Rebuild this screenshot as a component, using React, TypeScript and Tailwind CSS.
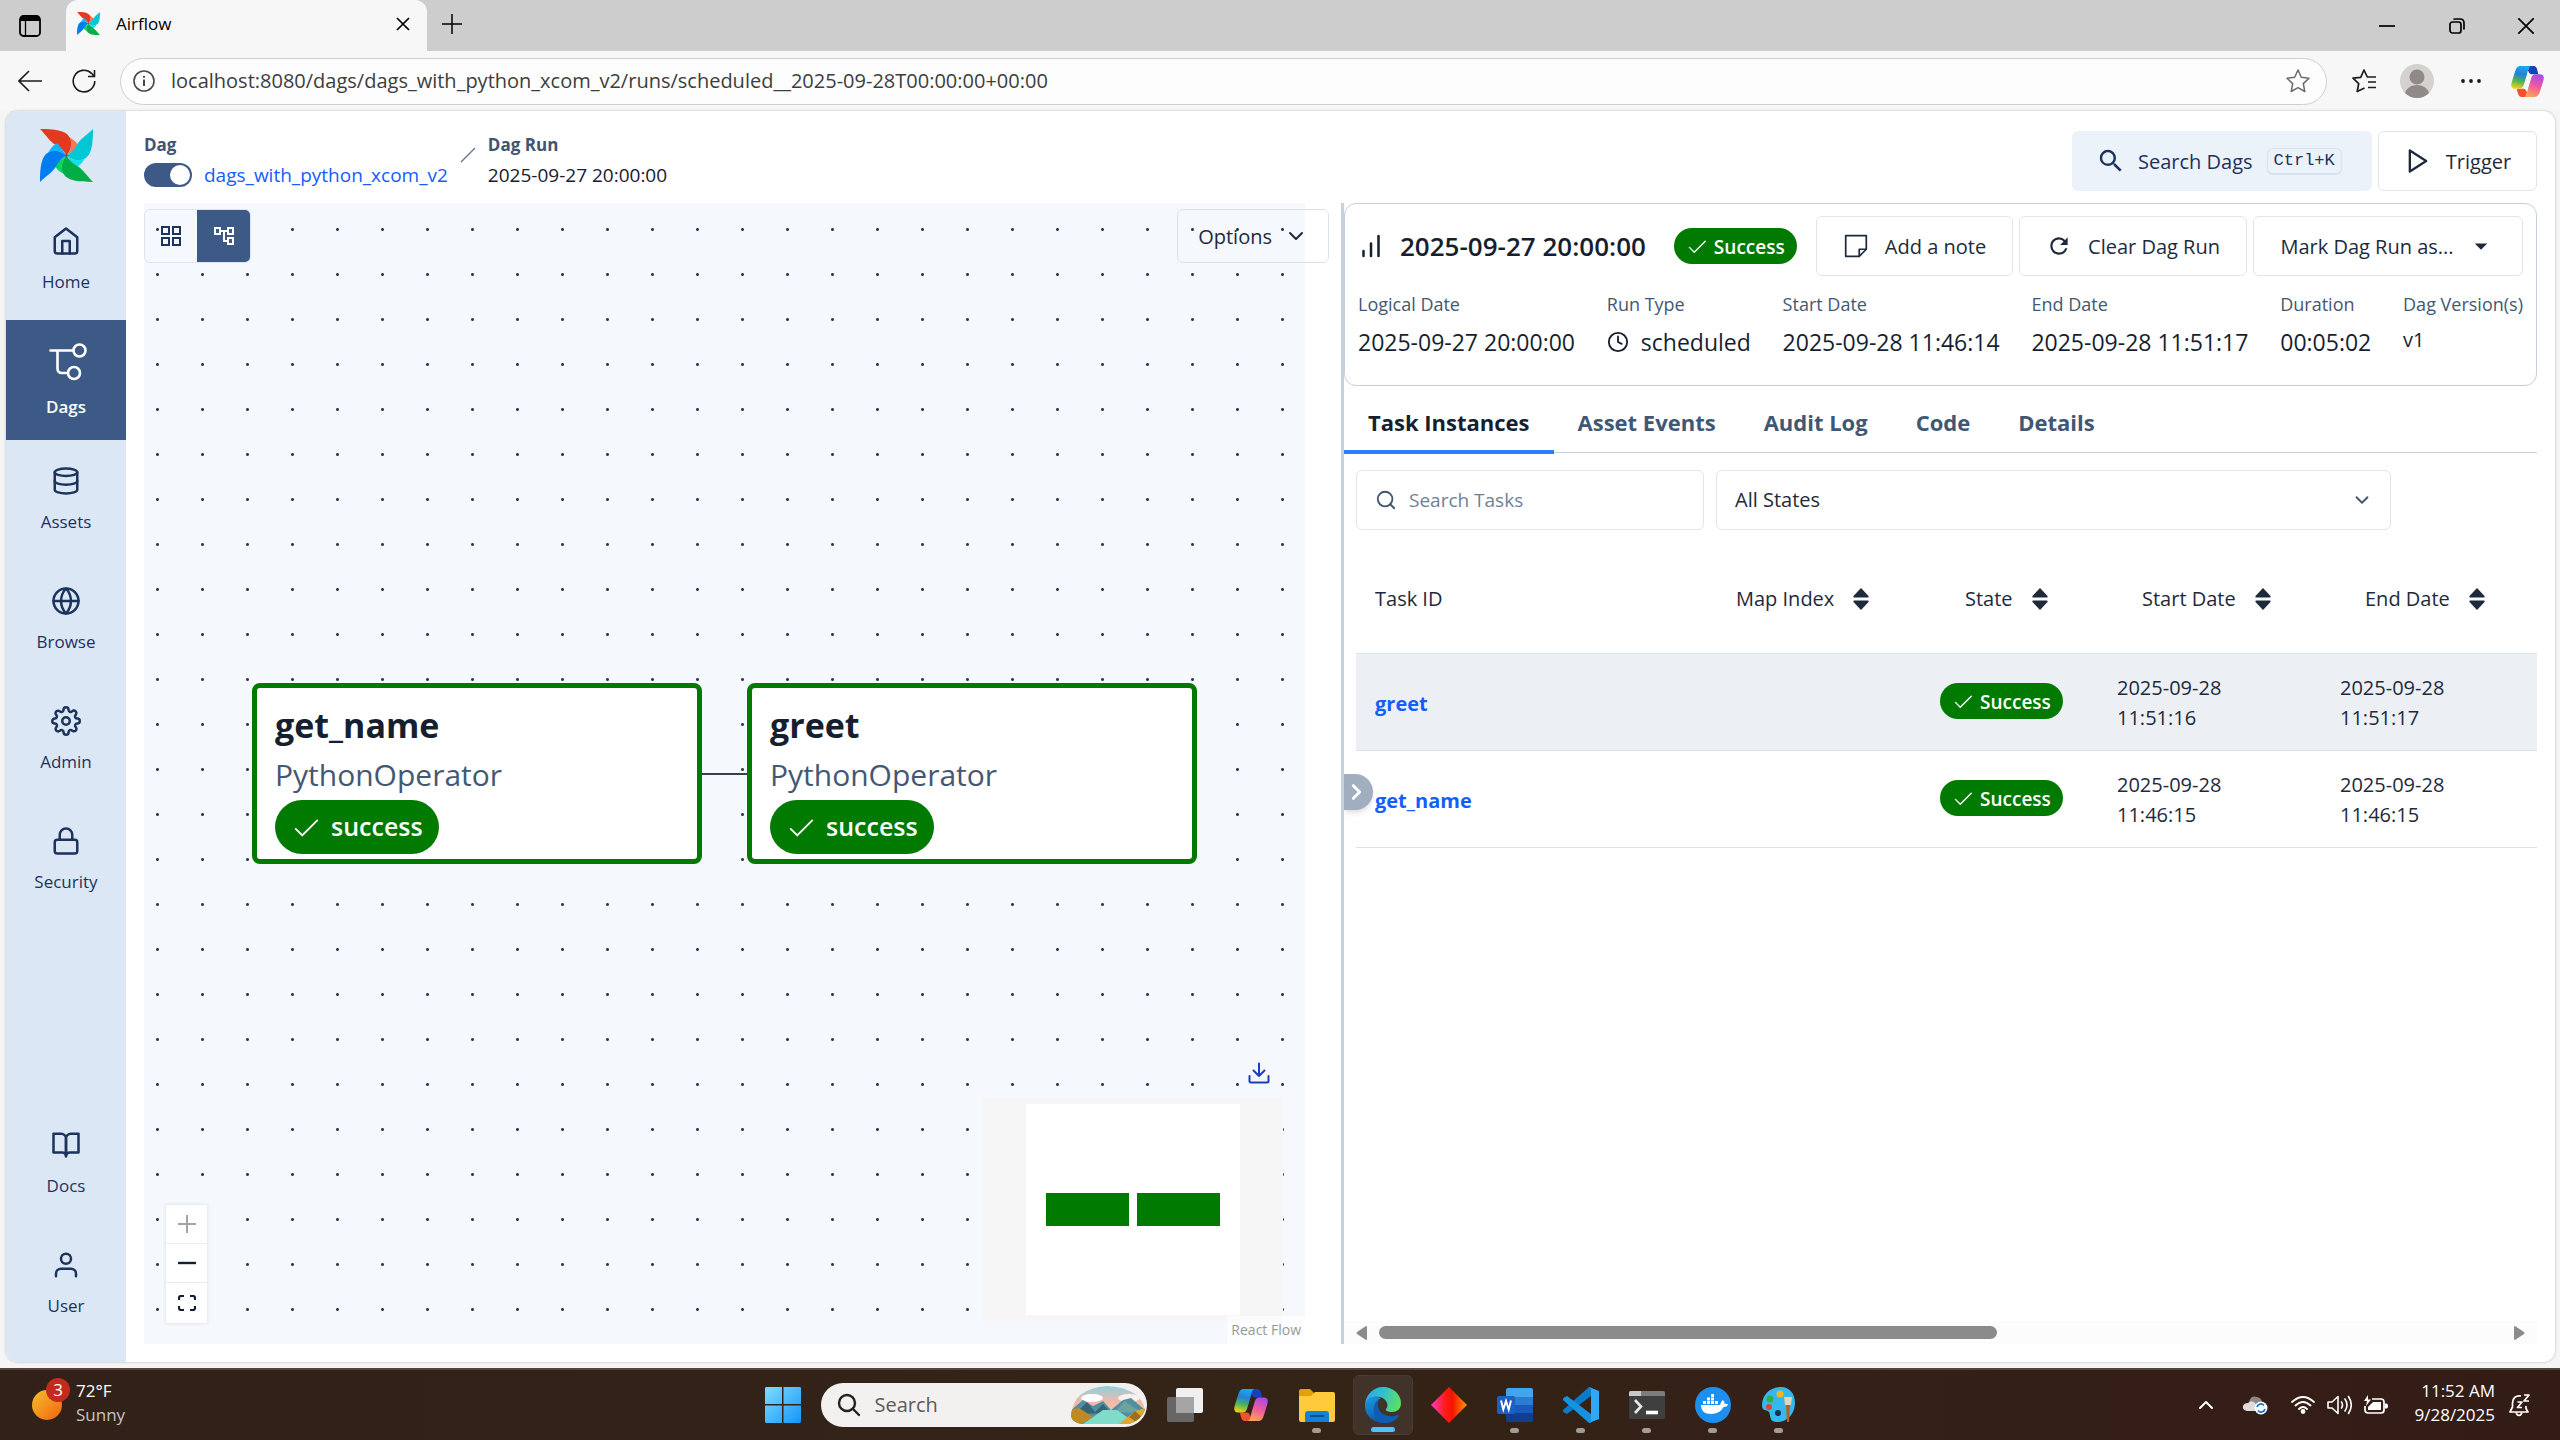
import type { ReactNode } from "react";
import {
  FiBarChart,
  FiBookOpen,
  FiChevronDown,
  FiChevronRight,
  FiChevronUp,
  FiClock,
  FiDatabase,
  FiGlobe,
  FiHome,
  FiLock,
  FiPlay,
  FiSearch,
  FiSettings,
  FiUser,
} from "react-icons/fi";
import { MdArrowDropDown, MdOutlineAccountTree, MdRefresh, MdSearch } from "react-icons/md";
import { PiCheck } from "react-icons/pi";

/* ---------- drawings ---------- */

const BLADE = "M0 0C14 0 25 1 29 8C32 13 31 20 26 26C24 22 20 18 16 16C10 13 6 6 0 0Z";
const BLADE_TIP = "M29 8C34 11 37 14 38 17C35 20 31 22 26 26C31 20 32 14 29 8Z";

function Pinwheel({ className }: { className: string }) {
  const blades = [
    { angle: 0, dark: "#e43921", light: "#ff7557" },
    { angle: 90, dark: "#00c7d4", light: "#11e1ee" },
    { angle: 180, dark: "#00ad46", light: "#04d659" },
    { angle: 270, dark: "#017cee", light: "#0cb6ff" },
  ];
  return (
    <svg viewBox="0 0 52 52" className={className} aria-hidden="true">
      {blades.map((b) => (
        <g key={b.angle} transform={`rotate(${b.angle} 26 26)`}>
          <path d={BLADE_TIP} fill={b.light} />
          <path d={BLADE} fill={b.dark} />
        </g>
      ))}
      <circle cx="26" cy="26" r="1.2" fill="#51504f" />
    </svg>
  );
}

function DagIcon() {
  return (
    <svg viewBox="0 0 42 42" className="size-[42px]" fill="none" stroke="currentColor" strokeWidth="2.6" strokeLinecap="round" aria-hidden="true">
      <path d="M5.500 9.500H28.500M12.500 9.500V27.500Q12.500 32 17 32H22.500" />
      <circle cx="34.500" cy="9.500" r="6" />
      <circle cx="29" cy="32" r="6" />
    </svg>
  );
}

function NoteIcon() {
  return (
    <svg viewBox="0 0 24 24" className="size-[26px]" fill="none" stroke="currentColor" strokeWidth="1.600" strokeLinejoin="round" aria-hidden="true">
      <path d="M2.500 2.500H21.500V15L15 21.500H2.500Z" />
      <path d="M15 21.500V15H21.500" />
    </svg>
  );
}

function SortIcon() {
  return (
    <svg viewBox="0 0 16 22" className="h-[22px] w-4" fill="currentColor" aria-hidden="true">
      <path d="M8 0L15.500 8Q16 9.500 15 9.500H1Q0 9.500 .5 8Z" />
      <path d="M8 22L15.500 14Q16 12.500 15 12.500H1Q0 12.500 .5 14Z" />
    </svg>
  );
}

function CopilotIcon({ className }: { className: string }) {
  return (
    <svg viewBox="0 0 32 32" className={className} aria-hidden="true">
      <defs>
        <linearGradient id="cpA" x1="0.5" y1="0" x2="0.3" y2="1">
          <stop offset="0" stopColor="#1aa7ee" />
          <stop offset="0.35" stopColor="#2381d8" />
          <stop offset="0.65" stopColor="#4cb35b" />
          <stop offset="1" stopColor="#f4d312" />
        </linearGradient>
        <linearGradient id="cpB" x1="0.7" y1="0" x2="0.4" y2="1">
          <stop offset="0" stopColor="#a64af0" />
          <stop offset="0.5" stopColor="#ef5a9c" />
          <stop offset="1" stopColor="#ff9f58" />
        </linearGradient>
      </defs>
      <path d="M18 1H22C24 1 25 3 25.500 5L26.500 9H20Q17.500 9 16.500 5Z" fill="#1442b8" />
      <path d="M14 31H10C8 31 7 29 6.500 27L5.500 23H12Q14.500 23 15.500 27Z" fill="#f0532f" />
      <path d="M9 1H19C17 2 16.500 5 15.500 9L12.500 19Q11.500 23 8 23H4Q-1 23 .6 17L4 6Q5.500 1 9 1Z" fill="url(#cpA)" />
      <path d="M23 31H13C15 30 15.500 27 16.500 23L19.500 13Q20.500 9 24 9H28Q33 9 31.400 15L28 26Q26.500 31 23 31Z" fill="url(#cpB)" />
    </svg>
  );
}

function WindowsIcon() {
  return (
    <svg viewBox="0 0 36 36" className="size-9" aria-hidden="true">
      <defs>
        <linearGradient id="win" x1="0" y1="0" x2="1" y2="1">
          <stop offset="0" stopColor="#7fdcff" />
          <stop offset="1" stopColor="#1496f8" />
        </linearGradient>
      </defs>
      <path d="M1 0H17V17H0V1ZM18.500 0H35L36 1V17H18.500ZM0 18.500H17V36H1L0 35ZM18.500 18.500H36V35L35 36H18.500Z" fill="url(#win)" />
    </svg>
  );
}

function SearchArt() {
  return (
    <svg viewBox="0 0 76 38" className="h-[38px] w-[76px]" aria-hidden="true">
      <defs>
        <linearGradient id="sky" x1="0" y1="0" x2="0" y2="1">
          <stop offset="0" stopColor="#8fd0e0" />
          <stop offset="0.45" stopColor="#f6b8a4" />
          <stop offset="1" stopColor="#f2d7c0" />
        </linearGradient>
        <clipPath id="artClip">
          <path d="M2 30Q4 2 38 0Q72 2 76 24Q72 34 60 38H12Q3 36 2 30Z" />
        </clipPath>
      </defs>
      <g clipPath="url(#artClip)">
        <rect width="76" height="38" fill="url(#sky)" />
        <ellipse cx="23" cy="12" rx="11" ry="4" fill="#fff" />
        <ellipse cx="60" cy="12" rx="11" ry="4" fill="#fbeff0" />
        <path d="M0 26L14 14L24 20L34 15L42 24L54 14L62 12L76 24V38H0Z" fill="#4f8fa0" />
        <path d="M6 28L18 16L26 26L34 18L42 27Z" fill="#326577" />
        <path d="M46 26L56 15L66 22L72 27Z" fill="#6aa3a0" />
        <path d="M34 24H48L68 38H14Z" fill="#7fdccb" />
        <path d="M0 24L10 22L24 31L12 38H0Z" fill="#c08a22" />
        <path d="M76 22L66 25L50 38H76Z" fill="#e0a532" />
        <path d="M66 25L60 31L70 38L76 34Z" fill="#9c6f1d" />
      </g>
    </svg>
  );
}

function TaskViewIcon() {
  return (
    <svg viewBox="0 0 36 36" className="size-9" aria-hidden="true">
      <rect x="9" y="1" width="27" height="25" rx="2" fill="#f0f0f0" />
      <rect x="0" y="10" width="27" height="25" rx="2" fill="#6e6e6e" fillOpacity="0.9" />
      <path d="M9 10H27V26H9Z" fill="#a5a5a5" />
    </svg>
  );
}

function FolderIcon() {
  return (
    <svg viewBox="0 0 36 36" className="size-9" aria-hidden="true">
      <path d="M0 4Q0 2 2 2H11L15 6H20V12H0Z" fill="#e3a008" />
      <path d="M0 9H12L16 5H34Q36 5 36 7V33Q36 35 34 35H2Q0 35 0 33Z" fill="#ffcb3d" />
      <path d="M6 35V27Q6 24 9 24H27Q30 24 30 27V35Z" fill="#1481d6" />
      <path d="M11 29H25" stroke="#0b4f8e" strokeWidth="2" />
    </svg>
  );
}

function EdgeIcon() {
  return (
    <svg viewBox="0 0 36 36" className="size-9" aria-hidden="true">
      <defs>
        <linearGradient id="edTop" x1="0" y1="0.3" x2="1" y2="0.5">
          <stop offset="0" stopColor="#2ba8e8" />
          <stop offset="0.5" stopColor="#35c1c9" />
          <stop offset="1" stopColor="#5fe05f" />
        </linearGradient>
        <linearGradient id="edLow" x1="0" y1="0" x2="0.6" y2="1">
          <stop offset="0" stopColor="#1b9de2" />
          <stop offset="1" stopColor="#0c4fa3" />
        </linearGradient>
      </defs>
      <path d="M0 17C1 7 9 0 18 0C29 0 36 8 36 16C36 22 32 25 27 25C23 25 20 24 21 22C23 20 23 17 21 14C17 8 5 8 0 17Z" fill="url(#edTop)" />
      <path d="M0 17C3 9 11 8 16 11C12 13 10 18 11 23C13 30 22 33 31 29C34 28 34 29 33 30C29 35 24 36 18 36C8 36-1 28 0 17Z" fill="url(#edLow)" />
      <path d="M16 11C11 15 12 22 17 26C22 30 28 30 32 28C34 27 34 29 33 30C29 35 23 37 17 36C7 33 5 16 16 11Z" fill="#0f5cb3" />
    </svg>
  );
}

function DiamondIcon() {
  return (
    <svg viewBox="0 0 36 36" className="size-9" aria-hidden="true">
      <defs>
        <linearGradient id="dia">
          <stop offset="0" stopColor="#ff3fc0" />
          <stop offset="0.4" stopColor="#ff1a1a" />
          <stop offset="0.6" stopColor="#f51400" />
          <stop offset="1" stopColor="#ff9a00" />
        </linearGradient>
      </defs>
      <path d="M18 0L36 18L18 36L0 18Z" fill="url(#dia)" />
    </svg>
  );
}

function WordIcon() {
  return (
    <svg viewBox="0 0 36 36" className="size-9" aria-hidden="true">
      <path d="M9 3Q9 1 11 1H34Q36 1 36 3V10H9Z" fill="#41a5ee" />
      <path d="M9 10H36V18H9Z" fill="#2b7cd3" />
      <path d="M9 18H36V26H9Z" fill="#185abd" />
      <path d="M9 26H36V33Q36 35 34 35H11Q9 35 9 33Z" fill="#103f91" />
      <rect x="0" y="9" width="18" height="18" rx="2" fill="#1f5fc4" />
      <path d="M4 13.500L6.300 22.500L9 14L11.700 22.500L14 13.500" fill="none" stroke="#fff" strokeWidth="1.900" />
    </svg>
  );
}

function CodeIcon() {
  return (
    <svg viewBox="0 0 36 36" className="size-9" aria-hidden="true">
      <path d="M0 23L26 0L28 .5V9L4 27L1 25.500Q-.5 24 0 23Z" fill="#0a7ac9" />
      <path d="M0 13L26 36L28 35.500V27L4 9L1 10.500Q-.5 12 0 13Z" fill="#1592e0" />
      <path d="M26 0L36 4V32L26 36Q28 35 28 33V3Q28 1 26 0Z" fill="#31a9f2" />
    </svg>
  );
}

function TerminalIcon() {
  return (
    <svg viewBox="0 0 36 28" className="h-7 w-9" aria-hidden="true">
      <rect width="36" height="28" rx="2" fill="#3f3f3f" />
      <path d="M0 2Q0 0 2 0H34Q36 0 36 2V5H0Z" fill="#7d7d7d" />
      <path d="M0 2Q0 0 2 0H12V5H0Z" fill="#c9c9c9" />
      <path d="M6 9L12 15.500L6 22" fill="none" stroke="#e8e8e8" strokeWidth="2.600" />
      <path d="M17 21.500H29" stroke="#fff" strokeWidth="3.600" />
    </svg>
  );
}

function DockerIcon() {
  return (
    <svg viewBox="0 0 36 36" className="size-9" aria-hidden="true">
      <circle cx="18" cy="18" r="18" fill="#1d8fee" />
      <path d="M6 18H25Q26 14 28 13Q30 15 29.500 17Q32 16.500 33 17.500Q32 20 28.500 20Q25 27 16 27Q6 27 6 18Z" fill="#fff" />
      <path d="M8 14h3v3h-3zM12 14h3v3h-3zM16 14h3v3h-3zM20 14h3v3h-3zM12 10.500h3v3h-3zM16 10.500h3v3h-3zM16 7h3v3h-3z" fill="#fff" />
    </svg>
  );
}

function PaintIcon() {
  return (
    <svg viewBox="0 0 36 36" className="size-9" aria-hidden="true">
      <path d="M20 0C9 0 1 8 1 18C1 25 6 22 8 25C10 29 8 35 16 35C27 35 34 26 34 16C34 6 28 0 20 0Z" fill="#35b8ee" />
      <circle cx="19" cy="7" r="3.500" fill="#f6b51e" />
      <circle cx="9" cy="12" r="3.500" fill="#2fae4a" />
      <circle cx="8" cy="20" r="3" fill="#e2432c" />
      <circle cx="17" cy="26" r="3" fill="#12304f" />
      <path d="M23 10H31L30 18H24Z" fill="#e8d2b8" />
      <path d="M25 18H29L28 35H26Z" fill="#b5611d" />
    </svg>
  );
}

/* ---------- shared bits ---------- */

function SuccessBadge() {
  return (
    <span className="inline-flex h-9 items-center gap-1.5 rounded-full bg-[#007a00] px-3 text-[19px] font-semibold text-white">
      <PiCheck className="size-[22px]" />
      <span className="pt-0.5">Success</span>
    </span>
  );
}

function OutlineButton({ children, className = "" }: { children: ReactNode; className?: string }) {
  return (
    <button className={`flex h-[60px] shrink-0 items-center rounded-md border border-[#dfe5ec] bg-white text-[20px] font-medium whitespace-nowrap text-[#1e2a3b] ${className}`}>
      {children}
    </button>
  );
}

/* ---------- browser ---------- */

function BrowserTabs() {
  return (
    <div className="flex h-[51px] shrink-0 items-stretch bg-[#cdcdcd] text-black">
      <button aria-label="Tab actions" className="flex w-[66px] items-center justify-center pr-1.5">
        <svg viewBox="0 0 22 22" className="size-[22px]" aria-hidden="true">
          <rect x="1" y="1" width="20" height="20" rx="3.500" fill="none" stroke="#000" strokeWidth="1.800" />
          <path d="M1 6V4Q1 1 4 1H18Q21 1 21 4V6Z" />
          <path d="M6.500 6V21" stroke="#000" strokeWidth="1.300" />
        </svg>
      </button>
      <div className="flex w-[361px] items-center rounded-t-xl bg-[#f7f7f7] pr-3 pb-1 pl-[11px]">
        <Pinwheel className="size-[23px]" />
        <span className="ml-4 text-[17px]">Airflow</span>
        <button aria-label="Close tab" className="ml-auto p-1">
          <svg viewBox="0 0 16 16" className="size-4" stroke="#000" strokeWidth="1.700" aria-hidden="true">
            <path d="M2 2L14 14M14 2L2 14" />
          </svg>
        </button>
      </div>
      <button aria-label="New tab" className="flex w-[50px] items-center justify-center pb-1">
        <svg viewBox="0 0 20 20" className="size-5" stroke="#000" strokeWidth="1.500" aria-hidden="true">
          <path d="M10 0V20M0 10H20" />
        </svg>
      </button>
      <div className="ml-auto flex">
        <button aria-label="Minimize" className="flex w-[70px] items-center justify-center">
          <svg viewBox="0 0 16 16" className="size-4" stroke="#000" strokeWidth="1.700" aria-hidden="true">
            <path d="M0 8H16" />
          </svg>
        </button>
        <button aria-label="Restore" className="flex w-[70px] items-center justify-center">
          <svg viewBox="0 0 16 16" className="size-4" fill="none" stroke="#000" strokeWidth="1.700" aria-hidden="true">
            <rect x="1" y="4" width="11" height="11" rx="2.500" />
            <path d="M4.500 1.500Q5 1 6 1H11Q15 1 15 5V10Q15 11 14.500 11.500" />
          </svg>
        </button>
        <button aria-label="Close window" className="flex w-[68px] items-center justify-center">
          <svg viewBox="0 0 16 16" className="size-4" stroke="#000" strokeWidth="1.700" aria-hidden="true">
            <path d="M0 0L16 16M16 0L0 16" />
          </svg>
        </button>
      </div>
    </div>
  );
}

function AddressBar() {
  return (
    <div className="flex h-[60px] shrink-0 items-center bg-[#f7f7f7] pr-4 text-[#1b1b1b]">
      <button aria-label="Back" className="ml-4 flex size-7 items-center justify-center">
        <svg viewBox="0 0 24 22" className="h-[22px] w-6" fill="none" stroke="currentColor" strokeWidth="1.600" aria-hidden="true">
          <path d="M24 11H1M11 1L1 11L11 21" />
        </svg>
      </button>
      <button aria-label="Refresh" className="ml-[26px] flex size-7 items-center justify-center">
        <svg viewBox="0 0 24 24" className="size-6" fill="none" stroke="currentColor" strokeWidth="1.600" aria-hidden="true">
          <path d="M22.800 12A10.800 10.800 0 1 1 19.500 4.300L22 7M22.500 1V7.500H16" />
        </svg>
      </button>
      <div className="ml-[22px] flex h-[47px] flex-1 items-center rounded-full border border-[#cfcfcf] bg-[#fdfdfd] pr-4 pl-3">
        <svg viewBox="0 0 22 22" className="size-[22px]" fill="none" stroke="#4a4a4a" strokeWidth="1.600" aria-hidden="true">
          <circle cx="11" cy="11" r="10" />
          <path d="M11 9.500V16M11 6V7.800" strokeWidth="2" />
        </svg>
        <input
          aria-label="Address"
          className="ml-4 min-w-0 flex-1 bg-transparent text-[20px] text-[#3d3d3d] outline-none"
          defaultValue="localhost:8080/dags/dags_with_python_xcom_v2/runs/scheduled__2025-09-28T00:00:00+00:00"
        />
        <button aria-label="Add to favorites">
          <svg viewBox="0 0 24 24" className="size-6" fill="none" stroke="#6b6b6b" strokeWidth="1.500" strokeLinejoin="round" aria-hidden="true">
            <path d="M12 1L15.300 8.300L23 9.200L17.300 14.600L18.800 22.500L12 18.700L5.200 22.500L6.700 14.600L1 9.200L8.700 8.300Z" />
          </svg>
        </button>
      </div>
      <button aria-label="Favorites" className="ml-[25px]">
        <svg viewBox="0 0 24 24" className="size-6" fill="none" stroke="currentColor" strokeWidth="1.700" strokeLinejoin="round" aria-hidden="true">
          <path d="M12.500 19L5.200 22.500L6.700 14.600L1 9.200L8.700 8.300L12 1L15.300 8H24M16 13H24M16 18.500H24" />
        </svg>
      </button>
      <button aria-label="Profile" className="ml-6">
        <svg viewBox="0 0 34 34" className="size-[34px]" aria-hidden="true">
          <circle cx="17" cy="17" r="17" fill="#d5d2ce" />
          <circle cx="17" cy="13" r="7.500" fill="#8f8a87" />
          <path d="M5 29Q8 21 17 21Q26 21 29 29Q24 34 17 34Q10 34 5 29Z" fill="#8f8a87" />
        </svg>
      </button>
      <button aria-label="Settings and more" className="ml-[26px]">
        <svg viewBox="0 0 22 6" className="h-1.5 w-[22px]" fill="currentColor" aria-hidden="true">
          <circle cx="3" cy="3" r="1.900" />
          <circle cx="11" cy="3" r="1.900" />
          <circle cx="19" cy="3" r="1.900" />
        </svg>
      </button>
      <button aria-label="Copilot" className="ml-[29px]">
        <CopilotIcon className="size-[33px]" />
      </button>
    </div>
  );
}

/* ---------- Airflow ---------- */

function NavItem({ icon, label, active = false }: { icon: ReactNode; label: string; active?: boolean }) {
  return (
    <a
      href="#"
      aria-current={active ? "page" : undefined}
      className={`flex h-[120px] flex-col items-center justify-center text-[17px] leading-6 ${
        active ? "gap-3 bg-[#3d5a87] font-semibold text-white" : "gap-3.5 font-medium text-[#1c335c]"
      }`}
    >
      {icon}
      <span>{label}</span>
    </a>
  );
}

function Sidebar() {
  return (
    <nav aria-label="Main" className="flex w-[120px] shrink-0 flex-col bg-[#dbe7f4] pb-[18px]">
      <a href="#" aria-label="Airflow" className="flex h-[89px] items-end justify-center pb-[18px]">
        <Pinwheel className="size-[53px]" />
      </a>
      <NavItem icon={<FiHome className="size-[30px]" />} label="Home" />
      <NavItem icon={<DagIcon />} label="Dags" active />
      <NavItem icon={<FiDatabase className="size-[30px]" />} label="Assets" />
      <NavItem icon={<FiGlobe className="size-[30px]" />} label="Browse" />
      <NavItem icon={<FiSettings className="size-[30px]" />} label="Admin" />
      <NavItem icon={<FiLock className="size-[30px]" />} label="Security" />
      <div className="mt-auto">
        <NavItem icon={<FiBookOpen className="size-[30px]" />} label="Docs" />
        <NavItem icon={<FiUser className="size-[30px]" />} label="User" />
      </div>
    </nav>
  );
}

function Header() {
  return (
    <header className="flex h-[92px] shrink-0 items-center">
      <div className="pt-1.5">
        <div className="text-[17px] leading-[30px] font-bold text-[#3f5570]">Dag</div>
        <div className="flex h-[30px] items-center gap-3">
          <label className="relative flex h-6 w-12 items-center rounded-full bg-[#3d5a87]">
            <input type="checkbox" defaultChecked aria-label="Pause or unpause dag" className="absolute inset-0 size-full cursor-pointer opacity-0" />
            <span className="pointer-events-none mr-0.5 ml-auto size-5 rounded-full bg-white" />
          </label>
          <a href="#" className="text-[19px] text-[#155dfc]">dags_with_python_xcom_v2</a>
        </div>
      </div>
      <svg viewBox="0 0 16 16" className="mx-3 mb-1 size-4" stroke="#5e7186" strokeWidth="1.300" aria-hidden="true">
        <path d="M1 15L15 1" />
      </svg>
      <div className="pt-1.5">
        <div className="text-[17px] leading-[30px] font-bold text-[#3f5570]">Dag Run</div>
        <div className="text-[19px] leading-[30px] text-[#16202f]">2025-09-27 20:00:00</div>
      </div>
      <div className="ml-auto flex gap-1.5 pt-2">
        <button className="flex h-[60px] w-[300px] items-center rounded-md bg-[#ebf2fa] pl-6 text-[20px] font-medium text-[#1c335c]">
          <MdSearch className="size-[30px]" />
          <span className="ml-3 pt-0.5">Search Dags</span>
          <kbd className="ml-3.5 rounded-md border border-b-2 border-[#d6e2f0] px-1.5 font-['Liberation_Mono',monospace] text-[17px] leading-6 font-normal">Ctrl+K</kbd>
        </button>
        <OutlineButton className="w-[159px] justify-center gap-3.5">
          <FiPlay className="size-7" />
          <span className="pt-0.5">Trigger</span>
        </OutlineButton>
      </div>
    </header>
  );
}

function TaskNode({ name }: { name: string }) {
  return (
    <article className="flex h-[181px] w-[450px] flex-col items-start rounded-lg border-[5px] border-[#007a00] bg-white pt-3 pl-[18px]">
      <h2 className="text-[34px] leading-[50px] font-bold text-[#161f2f]">{name}</h2>
      <p className="text-[30px] leading-[50px] text-[#435872]">PythonOperator</p>
      <span className="flex h-[54px] items-center gap-2.5 rounded-full bg-[#007a00] px-4 text-[25px] font-semibold text-white">
        <PiCheck className="size-[30px]" />
        success
      </span>
    </article>
  );
}

function GraphPanel() {
  return (
    <section aria-label="Graph" className="relative flex min-w-0 flex-[1_1_4px]">
      <div className="relative mr-9 flex flex-1 items-center justify-center overflow-hidden bg-[#f5f9fd] bg-[radial-gradient(circle,#2f3d4c_1px,transparent_2px)] bg-[length:45px_45px] bg-[position:-9px_4px]">
        <TaskNode name="get_name" />
        <div className="h-0.5 w-[45px] bg-[#34424f]" />
        <TaskNode name="greet" />

        <div className="absolute bottom-[21px] left-[22px] flex w-[41px] flex-col divide-y divide-[#ececec] bg-white text-[#161f2f] shadow-[0_0_3px_1px_rgba(0,0,0,0.08)]">
          <button aria-label="Zoom in" disabled className="flex h-[39px] items-center justify-center text-[#a2a4aa]">
            <svg viewBox="0 0 18 18" className="size-[18px]" stroke="currentColor" strokeWidth="2" aria-hidden="true">
              <path d="M9 0V18M0 9H18" />
            </svg>
          </button>
          <button aria-label="Zoom out" className="flex h-[39px] items-center justify-center">
            <svg viewBox="0 0 18 18" className="size-[18px]" stroke="currentColor" strokeWidth="2.400" aria-hidden="true">
              <path d="M0 9H18" />
            </svg>
          </button>
          <button aria-label="Fit view" className="flex h-[40px] items-center justify-center">
            <svg viewBox="0 0 18 16" className="h-4 w-[18px]" fill="none" stroke="currentColor" strokeWidth="2.200" aria-hidden="true">
              <path d="M1 5V3Q1 1 3 1H6M12 1H15Q17 1 17 3V5M17 11V13Q17 15 15 15H12M6 15H3Q1 15 1 13V11" />
            </svg>
          </button>
        </div>

        <button aria-label="Download graph" className="absolute right-[35px] bottom-[260px] text-[#1a3fb8]">
          <svg viewBox="0 0 22 22" className="size-[22px]" fill="none" stroke="currentColor" strokeWidth="2" strokeLinecap="round" strokeLinejoin="round" aria-hidden="true">
            <path d="M11 1.500V14M5.500 8.500L11 14L16.500 8.500M1.500 14V19Q1.500 20.500 3 20.500H19Q20.500 20.500 20.500 19V14" />
          </svg>
        </button>

        <div className="absolute right-[22px] bottom-[22px] flex h-[225px] w-[300px] justify-center bg-[#f6f6f6]">
          <div className="my-[7px] flex w-[214px] items-center justify-center gap-2 bg-white">
            <div className="h-[33px] w-[83px] bg-[#007a00]" />
            <div className="h-[33px] w-[83px] bg-[#007a00]" />
          </div>
        </div>
        <a href="#" className="absolute right-0 bottom-0 bg-white/60 px-1 text-[14px] leading-7 text-[#999]">React Flow</a>
      </div>

      <div className="absolute top-1.5 left-0 flex h-[54px] overflow-hidden rounded-md border border-[#dbe5f1] text-[#1c335c]">
        <button aria-label="Grid view" className="flex w-[52px] items-center justify-center">
          <svg viewBox="0 0 20 20" className="size-5" fill="none" stroke="currentColor" strokeWidth="2" aria-hidden="true">
            <path d="M1 1H8V8H1ZM12 1H19V8H12ZM1 12H8V19H1ZM12 12H19V19H12Z" />
          </svg>
        </button>
        <button aria-label="Graph view" aria-pressed="true" className="flex w-[53px] items-center justify-center bg-[#3d5a87] text-white">
          <MdOutlineAccountTree className="size-6" />
        </button>
      </div>
      <button className="absolute top-1.5 right-3 flex h-[54px] items-center gap-3 rounded-md border border-[#dbe2ea] px-5 text-[20px] font-medium text-[#1e2a3b]">
        <span className="pt-0.5">Options</span>
        <FiChevronDown className="size-6" />
      </button>
    </section>
  );
}

function Stat({ label, children }: { label: string; children: ReactNode }) {
  return (
    <div className="shrink-0">
      <dt className="text-[18px] leading-6 font-medium text-[#435872]">{label}</dt>
      <dd className="mt-2 flex h-9 items-center gap-3 text-[23px] text-[#161f2f]">{children}</dd>
    </div>
  );
}

function RunCard() {
  return (
    <section className="h-[183px] rounded-xl border border-[#c5cfdb] px-[13px] pt-3">
      <div className="flex items-center">
        <FiBarChart className="-ml-0.5 size-[30px] text-[#161f2f]" />
        <h1 className="ml-3.5 text-[26px] font-semibold whitespace-nowrap text-[#161f2f]">2025-09-27 20:00:00</h1>
        <div className="ml-7">
          <SuccessBadge />
        </div>
        <div className="ml-auto flex gap-1.5">
          <OutlineButton className="w-[197px] justify-center gap-4">
            <NoteIcon />
            <span className="pt-0.5">Add a note</span>
          </OutlineButton>
          <OutlineButton className="w-[228px] justify-center gap-4">
            <MdRefresh className="size-[26px]" />
            <span className="pt-0.5">Clear Dag Run</span>
          </OutlineButton>
          <OutlineButton className="w-[270px] justify-center gap-3">
            <span className="pt-0.5">Mark Dag Run as...</span>
            <MdArrowDropDown className="size-[30px]" />
          </OutlineButton>
        </div>
      </div>
      <dl className="mt-4 flex justify-between">
        <Stat label="Logical Date">2025-09-27 20:00:00</Stat>
        <Stat label="Run Type">
          <FiClock className="size-[22px]" />
          scheduled
        </Stat>
        <Stat label="Start Date">2025-09-28 11:46:14</Stat>
        <Stat label="End Date">2025-09-28 11:51:17</Stat>
        <Stat label="Duration">00:05:02</Stat>
        <Stat label="Dag Version(s)">
          <span className="pb-1 text-[20px]">v1</span>
        </Stat>
      </dl>
    </section>
  );
}

function SortHeader({ children }: { children: ReactNode }) {
  return (
    <th className="pl-[19px] text-left font-medium">
      <button className="flex items-center gap-[19px] pl-[25px]">
        {children}
        <SortIcon />
      </button>
    </th>
  );
}

const TASKS = [
  { id: "greet", day: "2025-09-28", start: "11:51:16", end: "11:51:17" },
  { id: "get_name", day: "2025-09-28", start: "11:46:15", end: "11:46:15" },
];

const TABS = ["Task Instances", "Asset Events", "Audit Log", "Code", "Details"];

function DetailsPanel() {
  return (
    <section aria-label="Run details" className="relative flex min-w-0 flex-1 flex-col overflow-hidden">
      <RunCard />
      <div role="tablist" className="mt-1.5 flex h-[61px] shrink-0 border-b border-[#c5d0dd] text-[22px]">
        {TABS.map((tab, i) => (
          <button
            key={tab}
            role="tab"
            aria-selected={i === 0}
            className={`-mb-0.5 border-b-4 px-6 pt-0.5 font-bold ${i === 0 ? "border-[#2b7fff] text-[#161f2f]" : "border-transparent text-[#3f5875]"}`}
          >
            {tab}
          </button>
        ))}
      </div>
      <div className="mt-[17px] ml-3 flex gap-3">
        <label className="flex h-[60px] w-[348px] items-center rounded-md border border-[#dfe5ec] pl-[18px]">
          <FiSearch className="size-[22px] shrink-0 text-[#3f5570]" />
          <input aria-label="Search tasks" placeholder="Search Tasks" className="ml-3 w-full bg-transparent text-[19px] outline-none placeholder:text-[#6f8196]" />
        </label>
        <div className="relative mr-[146px] flex-1">
          <select aria-label="State" className="h-[60px] w-full appearance-none rounded-md border border-[#dfe5ec] bg-transparent pl-[18px] text-[20px] text-[#1e2a3b]">
            <option>All States</option>
          </select>
          <FiChevronDown className="pointer-events-none absolute top-[19px] right-[18px] size-[22px] text-[#3f5570]" />
        </div>
      </div>
      <div className="mt-4 ml-3">
        <table className="w-full table-fixed text-[20px] text-[#1e2a3b]">
          <colgroup>
            <col />
            <col className="w-[229px]" />
            <col className="w-[177px]" />
            <col className="w-[223px]" />
            <col className="w-[216px]" />
          </colgroup>
          <thead>
            <tr className="h-[107px] border-b border-[#dbe1e8]">
              <th className="pl-[19px] text-left font-medium">Task ID</th>
              <SortHeader>Map Index</SortHeader>
              <SortHeader>State</SortHeader>
              <SortHeader>Start Date</SortHeader>
              <SortHeader>End Date</SortHeader>
            </tr>
          </thead>
          <tbody>
            {TASKS.map((task) => (
              <tr key={task.id} className="h-[97px] border-b border-[#dbe1e8] first:bg-[#ecf0f5]">
                <td className="pt-1 pl-[19px]">
                  <a href="#" className="font-bold text-[#155dfc]">{task.id}</a>
                </td>
                <td />
                <td className="pl-[19px] align-middle">
                  <SuccessBadge />
                </td>
                <td className="pt-0.5 pl-[19px] leading-[30px]">{task.day}<br />{task.start}</td>
                <td className="pt-0.5 pl-[19px] leading-[30px]">{task.day}<br />{task.end}</td>
              </tr>
            ))}
          </tbody>
        </table>
      </div>
      <div className="mt-auto flex h-[23px] items-center bg-[#fcfcfc] px-3 text-[#8b8b8b]">
        <svg viewBox="0 0 11 14" className="h-3.5 w-[11px]" fill="currentColor" aria-hidden="true">
          <path d="M10 0Q11 0 11 1V13Q11 14 10 14L1 8Q0 7 1 6Z" />
        </svg>
        <div className="mx-3 flex-1">
          <div className="h-[13px] w-[55%] rounded-full bg-[#8b8b8b]" />
        </div>
        <svg viewBox="0 0 11 14" className="h-3.5 w-[11px]" fill="currentColor" aria-hidden="true">
          <path d="M1 0Q0 0 0 1V13Q0 14 1 14L10 8Q11 7 10 6Z" />
        </svg>
      </div>
      <button aria-label="Collapse details" className="absolute top-1/2 left-0 flex h-9 w-[29px] items-center justify-center rounded-r-full bg-[#a1aebf] pr-1 text-white shadow-md">
        <FiChevronRight className="size-7" strokeWidth={3} />
      </button>
    </section>
  );
}

/* ---------- taskbar ---------- */

function TaskbarApp({ label, children, running = false, active = false }: { label: string; children: ReactNode; running?: boolean; active?: boolean }) {
  return (
    <button aria-label={label} className={`relative mx-[3px] flex size-[60px] items-center justify-center rounded-md ${active ? "border border-[#4a3a31] bg-[#41322a]" : ""}`}>
      {children}
      {running && <span className={`absolute bottom-0.5 h-[5px] rounded-full ${active ? "w-6 bg-[#4cc2ff]" : "w-[9px] bg-[#a39b96]"}`} />}
    </button>
  );
}

function Taskbar() {
  return (
    <footer className="relative flex h-[72px] shrink-0 items-center justify-center border-t-2 border-[#51453e] bg-linear-to-r from-[#322118] via-[#342317] to-[#341c16] pl-4 text-[17px] leading-6 text-white">
      <button className="absolute inset-y-0 left-8 flex items-center gap-3.5 text-left">
        <span className="relative size-[30px] rounded-full bg-linear-to-br from-[#f3bd2f] to-[#f2600c]">
          <span className="absolute -top-3 left-3.5 flex size-6 items-center justify-center rounded-full bg-[#c42b1c]">3</span>
        </span>
        <span className="pb-1">
          <span className="block">72°F</span>
          <span className="block text-[#c9c3bf]">Sunny</span>
        </span>
      </button>
      <div className="flex items-center">
        <button aria-label="Start" className="mr-5">
          <WindowsIcon />
        </button>
        <label className="mr-[5px] flex h-11 w-[326px] items-center rounded-full bg-[#f3f1f0] pr-0.5 pl-4 text-[#222]">
          <svg viewBox="0 0 24 24" className="size-6 shrink-0" fill="none" stroke="currentColor" strokeWidth="2.400" strokeLinecap="round" aria-hidden="true">
            <circle cx="10" cy="10" r="8" />
            <path d="M16 16L22 22" />
          </svg>
          <input aria-label="Search Windows" placeholder="Search" className="mx-3.5 min-w-0 flex-1 bg-transparent text-[20px] outline-none placeholder:text-[#5c5a59]" />
          <SearchArt />
        </label>
        <TaskbarApp label="Task view"><TaskViewIcon /></TaskbarApp>
        <TaskbarApp label="Copilot"><CopilotIcon className="size-[34px]" /></TaskbarApp>
        <TaskbarApp label="File Explorer" running><FolderIcon /></TaskbarApp>
        <TaskbarApp label="Edge" running active><EdgeIcon /></TaskbarApp>
        <TaskbarApp label="Diamond app"><DiamondIcon /></TaskbarApp>
        <TaskbarApp label="Word" running><WordIcon /></TaskbarApp>
        <TaskbarApp label="Visual Studio Code" running><CodeIcon /></TaskbarApp>
        <TaskbarApp label="Terminal" running><TerminalIcon /></TaskbarApp>
        <TaskbarApp label="Docker" running><DockerIcon /></TaskbarApp>
        <TaskbarApp label="Paint" running><PaintIcon /></TaskbarApp>
      </div>
      <div className="absolute inset-y-0 right-[29px] flex items-center">
        <button aria-label="Show hidden icons" className="mr-6">
          <FiChevronUp className="size-6" />
        </button>
        <svg viewBox="0 0 26 20" className="mr-[23px] h-5 w-[26px]" aria-hidden="true">
          <path d="M7 7Q9 0 15 2Q20 3 20 8Q17 12 10 10Z" fill="#8c8784" />
          <path d="M5 16Q0 15 1 11Q2 8 6 8Q10 4 14 9Q18 12 14 16Z" fill="#dedbd9" />
          <circle cx="19" cy="13" r="6.500" fill="#fff" />
          <path d="M15 12A4 4 0 0 1 22 10.500M23 14A4 4 0 0 1 16 15.500" fill="none" stroke="#1672c9" strokeWidth="1.700" />
        </svg>
        <svg viewBox="0 0 24 18" className="mr-3 h-[18px] w-6" fill="none" stroke="#fff" strokeWidth="1.800" strokeLinecap="round" aria-hidden="true">
          <path d="M1 6Q12-4 23 6M4.500 9.500Q12 2.500 19.500 9.500M8 13Q12 9 16 13" />
          <circle cx="12" cy="15.500" r="1.500" fill="#fff" />
        </svg>
        <svg viewBox="0 0 25 20" className="mr-[11px] h-5 w-[25px]" fill="none" stroke="#fff" strokeWidth="1.600" strokeLinecap="round" strokeLinejoin="round" aria-hidden="true">
          <path d="M1 7H5L11 1.500V18.500L5 13H1ZM14.500 7Q16.500 10 14.500 13M18 4Q22 10 18 16M21.500 1.500Q27 10 21.500 18.500" />
        </svg>
        <svg viewBox="0 0 25 20" className="mr-[26px] h-5 w-[25px]" aria-hidden="true">
          <path d="M9 4H18Q21 4 21 7V15Q21 18 18 18H5Q2 18 2 15V11" fill="none" stroke="#fff" strokeWidth="1.700" />
          <path d="M10 7H18V15H5V12Z" fill="#fff" />
          <path d="M22 8.500H23.500Q25 8.500 25 11Q25 13.500 23.500 13.500H22Z" fill="#fff" />
          <path d="M5 0L1 6H4L3 11L8 4.500H5Z" fill="#fff" />
        </svg>
        <button className="mr-3.5 pb-1 text-right whitespace-nowrap">
          <span className="block">11:52 AM</span>
          <span className="block">9/28/2025</span>
        </button>
        <svg viewBox="0 0 22 24" className="h-6 w-[22px]" fill="none" stroke="#fff" strokeWidth="1.700" strokeLinejoin="round" aria-hidden="true">
          <path d="M12 3Q4 2 3.500 10V14L1 19H19L17 15.500V13M7 20Q10 25 13 20M15 2H20L15 8H20M8.500 9H13L8.500 14.500H13" />
        </svg>
      </div>
    </footer>
  );
}

export default function App() {
  return (
    <div className="flex h-screen flex-col overflow-hidden bg-[#f5f5f5] font-['Open_Sans','Noto_Sans',sans-serif]">
      <BrowserTabs />
      <AddressBar />
      <div className="mr-[5px] mb-1.5 ml-1.5 flex min-h-0 flex-1 overflow-hidden rounded-xl bg-white shadow-[0_0_2px_1px_rgba(0,0,0,0.12)]">
        <Sidebar />
        <main className="flex min-w-0 flex-1 flex-col px-[18px] pb-[18px]">
          <Header />
          <div className="flex min-h-0 flex-1">
            <GraphPanel />
            <div className="w-[3px] bg-[#c8d1dc]" />
            <DetailsPanel />
          </div>
        </main>
      </div>
      <Taskbar />
    </div>
  );
}
